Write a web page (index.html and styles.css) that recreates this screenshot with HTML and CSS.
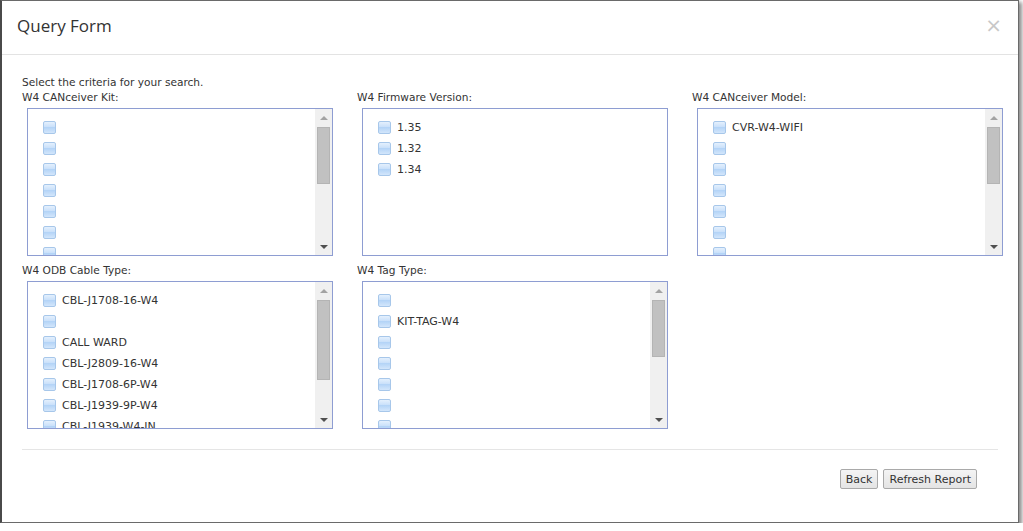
FILE: index.html
```html
<!DOCTYPE html>
<html>
<head>
<meta charset="utf-8">
<link rel="stylesheet" href="styles.css">
</head>
<body>
<div class="modal">
  <div class="modal-header">
    <h1 class="modal-title">Query Form</h1>
    <span class="close">×</span>
  </div>
  <div class="modal-body">
    <p class="intro">Select the criteria for your search.</p>
    <div class="grid">
      <div class="field">
        <label class="field-label">W4 CANceiver Kit:</label>
        <div class="listbox">
          <ul class="items">
            <li><span class="cb"></span></li>
            <li><span class="cb"></span></li>
            <li><span class="cb"></span></li>
            <li><span class="cb"></span></li>
            <li><span class="cb"></span></li>
            <li><span class="cb"></span></li>
            <li><span class="cb"></span></li>
          </ul>
          <div class="scrollbar">
            <span class="arrow up"></span>
            <div class="track"><div class="thumb" style="margin-top:1px;height:57px"></div></div>
            <span class="arrow down"></span>
          </div>
        </div>
      </div>
      <div class="field">
        <label class="field-label">W4 Firmware Version:</label>
        <div class="listbox">
          <ul class="items">
            <li><span class="cb"></span>1.35</li>
            <li><span class="cb"></span>1.32</li>
            <li><span class="cb"></span>1.34</li>
          </ul>
        </div>
      </div>
      <div class="field">
        <label class="field-label">W4 CANceiver Model:</label>
        <div class="listbox">
          <ul class="items">
            <li><span class="cb"></span>CVR-W4-WIFI</li>
            <li><span class="cb"></span></li>
            <li><span class="cb"></span></li>
            <li><span class="cb"></span></li>
            <li><span class="cb"></span></li>
            <li><span class="cb"></span></li>
            <li><span class="cb"></span></li>
          </ul>
          <div class="scrollbar">
            <span class="arrow up"></span>
            <div class="track"><div class="thumb" style="margin-top:1px;height:57px"></div></div>
            <span class="arrow down"></span>
          </div>
        </div>
      </div>
      <div class="field">
        <label class="field-label">W4 ODB Cable Type:</label>
        <div class="listbox">
          <ul class="items">
            <li><span class="cb"></span>CBL-J1708-16-W4</li>
            <li><span class="cb"></span></li>
            <li><span class="cb"></span>CALL WARD</li>
            <li><span class="cb"></span>CBL-J2809-16-W4</li>
            <li><span class="cb"></span>CBL-J1708-6P-W4</li>
            <li><span class="cb"></span>CBL-J1939-9P-W4</li>
            <li><span class="cb"></span>CBL-J1939-W4-IN</li>
          </ul>
          <div class="scrollbar">
            <span class="arrow up"></span>
            <div class="track"><div class="thumb" style="margin-top:1px;height:80px"></div></div>
            <span class="arrow down"></span>
          </div>
        </div>
      </div>
      <div class="field">
        <label class="field-label">W4 Tag Type:</label>
        <div class="listbox">
          <ul class="items">
            <li><span class="cb"></span></li>
            <li><span class="cb"></span>KIT-TAG-W4</li>
            <li><span class="cb"></span></li>
            <li><span class="cb"></span></li>
            <li><span class="cb"></span></li>
            <li><span class="cb"></span></li>
            <li><span class="cb"></span></li>
          </ul>
          <div class="scrollbar">
            <span class="arrow up"></span>
            <div class="track"><div class="thumb" style="margin-top:1px;height:57px"></div></div>
            <span class="arrow down"></span>
          </div>
        </div>
      </div>
    </div>
    <div class="footer">
      <button class="btn">Back</button>
      <button class="btn">Refresh Report</button>
    </div>
  </div>
</div>
</body>
</html>
```
FILE: styles.css
```css
html, body {
  margin: 0;
  padding: 0;
  background: #fff;
}
body {
  font-family: "DejaVu Sans", Verdana, sans-serif;
  font-size: 10.6px;
  color: #333;
}
.modal {
  box-sizing: border-box;
  width: 1019px;
  height: 523px;
  border: 1px solid #6a6a6a;
  border-left: 2px solid #4a4a4a;
  box-shadow: 2px 3px 4px 1px rgba(0, 0, 0, 0.45);
  background: #fff;
  display: flex;
  flex-direction: column;
}
.modal-header {
  height: 53px;
  border-bottom: 1px solid #e3e3e3;
  display: flex;
  align-items: center;
  justify-content: space-between;
  padding: 0 16px 0 15px;
}
.modal-title {
  margin: 0;
  font-family: "Open Sans", sans-serif;
  font-weight: 400;
  font-size: 17px;
  color: #333;
  padding-bottom: 4px;
}
.close {
  font-family: "DejaVu Sans", sans-serif;
  font-size: 20px;
  color: #c8c8c8;
  line-height: 1;
  padding-bottom: 6px;
}
.modal-body {
  padding: 20px 20px 0 20px;
}
.intro {
  margin: 0;
  line-height: 15px;
}
.grid {
  display: grid;
  grid-template-columns: repeat(3, 335px);
  row-gap: 7px;
}
.field-label {
  display: block;
  line-height: 15px;
  margin-bottom: 3px;
}
.listbox {
  margin-left: 5px;
  width: 306px;
  height: 148px;
  box-sizing: border-box;
  border: 1px solid #8e9dd2;
  display: flex;
  overflow: hidden;
  background: #fff;
}
.items {
  flex: 1;
  list-style: none;
  margin: 0;
  padding: 8px 0 0 15px;
  overflow: hidden;
}
.items li {
  height: 21px;
  display: flex;
  align-items: center;
  font-size: 11px;
  color: #333;
  white-space: nowrap;
}
.cb {
  box-sizing: border-box;
  width: 13px;
  height: 13px;
  border: 1px solid #a7c7ea;
  border-radius: 2px;
  background: linear-gradient(#e4f0fd 0%, #c9e0fa 45%, #b4d4f7 50%, #d3e6fb 100%);
  margin-right: 6px;
  flex: none;
}
.scrollbar {
  width: 17px;
  background: #f0f0f0;
  display: flex;
  flex-direction: column;
  align-items: center;
  flex: none;
}
.arrow {
  height: 17px;
  width: 17px;
  display: flex;
  align-items: center;
  justify-content: center;
  flex: none;
}
.arrow::before {
  content: "";
  width: 0;
  height: 0;
  border-left: 4px solid transparent;
  border-right: 4px solid transparent;
}
.arrow.up::before {
  border-bottom: 4px solid #a3a3a3;
}
.arrow.down::before {
  border-top: 4px solid #505050;
}
.track {
  flex: 1;
  width: 13px;
}
.thumb {
  background: #c1c1c1;
  border: 1px solid #b4b4b4;
  box-sizing: border-box;
  width: 13px;
}
.footer {
  margin-top: 20px;
  border-top: 1px solid #e5e5e5;
  display: flex;
  justify-content: flex-end;
  gap: 5px;
  padding: 19px 21px 0 0;
}
.btn {
  font-family: "DejaVu Sans", Verdana, sans-serif;
  font-size: 11px;
  color: #333;
  background: linear-gradient(#f4f4f4, #e4e4e4);
  border: 1px solid #a9a9a9;
  border-radius: 2px;
  height: 20px;
  padding: 0 5px;
  margin: 0;
}
```
